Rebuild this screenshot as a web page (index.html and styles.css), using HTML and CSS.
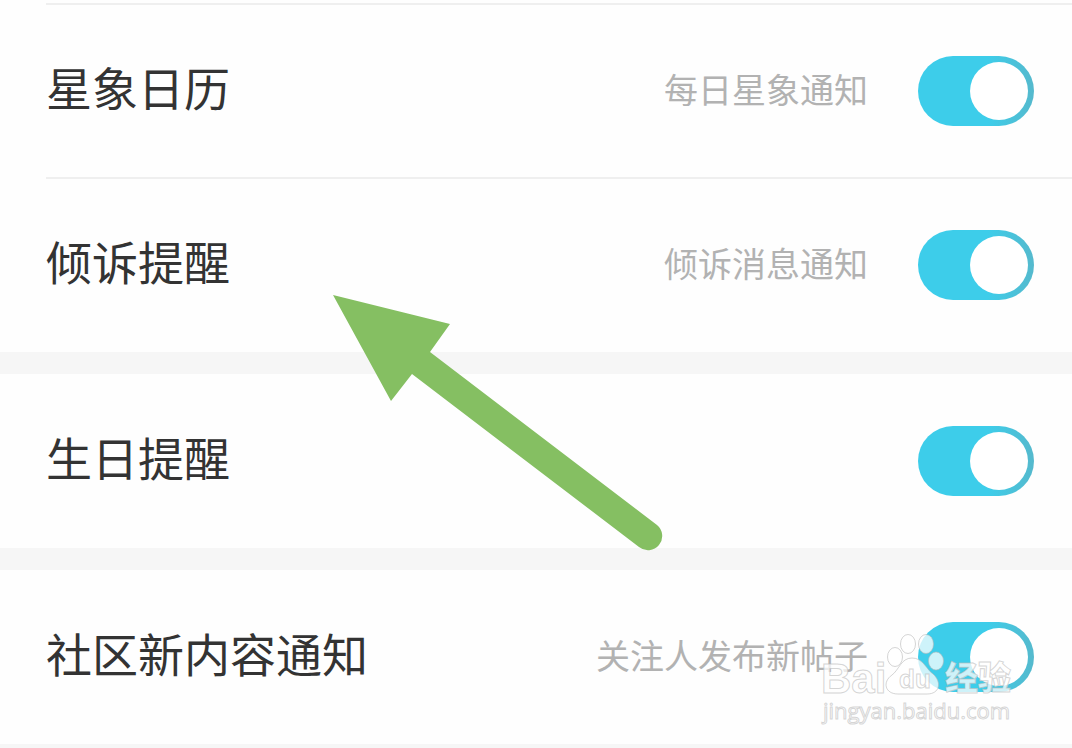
FILE: index.html
```html
<!DOCTYPE html>
<html lang="zh-CN">
<head>
<meta charset="utf-8">
<meta name="viewport" content="width=device-width, initial-scale=1">
<title>通知设置</title>
<link rel="stylesheet" href="styles.css">
</head>
<body>
<main class="settings">
  <section class="group">
    <label class="row">
      <span class="title">星象日历</span>
      <span class="hint">每日星象通知</span>
      <input class="switch" type="checkbox" role="switch" checked>
    </label>
    <label class="row">
      <span class="title">倾诉提醒</span>
      <span class="hint">倾诉消息通知</span>
      <input class="switch" type="checkbox" role="switch" checked>
    </label>
  </section>
  <section class="group">
    <label class="row">
      <span class="title">生日提醒</span>
      <input class="switch" type="checkbox" role="switch" checked>
    </label>
  </section>
  <section class="group">
    <label class="row">
      <span class="title">社区新内容通知</span>
      <span class="hint">关注人发布新帖子</span>
      <input class="switch" type="checkbox" role="switch" checked>
    </label>
  </section>

  <svg class="arrow" viewBox="0 0 330 256" aria-hidden="true">
    <path d="M0 0 L117 29 L97 57 L324 230 A14 14 0 0 1 306 252 L79 79 L58 106 Z"/>
  </svg>

  <svg class="watermark" viewBox="0 0 210 100" role="img" aria-label="Baidu 经验 jingyan.baidu.com">
    <g class="mark">
      <ellipse cx="75" cy="25" rx="7.5" ry="9.5"/>
      <ellipse cx="88" cy="12" rx="7.5" ry="9.5"/>
      <ellipse cx="106" cy="12" rx="7.5" ry="9.5"/>
      <ellipse cx="116" cy="29" rx="7.5" ry="9"/>
      <path d="M92 26 C81 26 79 38 72 43 C62 50 65 62 78 62 H107 C120 62 122 50 113 42 C106 37 103 26 92 26 Z"/>
    </g>
    <text class="mark brand" x="1" y="61">Bai</text>
    <text class="mark du" x="79" y="56">du</text>
    <text class="mark word" x="125" y="58">经验</text>
    <text class="mark url" x="3" y="87">jingyan.baidu.com</text>
  </svg>
</main>
</body>
</html>
```
FILE: styles.css
```css
* {
  box-sizing: border-box;
}

body {
  margin: 0;
  background: #f6f6f6;
  font-family: "Noto Sans CJK SC", sans-serif;
}

.settings {
  position: relative;
  display: flex;
  flex-direction: column;
  gap: 22px;
  padding-bottom: 4px;
  overflow: hidden;
}

.group {
  background: #fefefe;
}

.group:first-child {
  padding-top: 4px;
}

.row {
  position: relative;
  display: flex;
  align-items: center;
  gap: 50px;
  height: 174px;
  padding: 0 38px 0 46px;
  cursor: pointer;
}

.group:first-child .row::before {
  content: "";
  position: absolute;
  top: -1px;
  right: 0;
  left: 46px;
  height: 2px;
  background: #efefef;
}

.title {
  flex: 1;
  padding-bottom: 10px;
  color: #333;
  font-size: 46px;
  line-height: 60px;
}

.hint {
  padding-bottom: 4px;
  color: #b2b2b2;
  font-size: 34px;
  line-height: 48px;
}

.switch {
  appearance: none;
  flex: none;
  width: 116px;
  height: 70px;
  margin: 0;
  padding: 6px;
  border-radius: 35px;
  background: linear-gradient(90deg, #3dcdea 60%, #55b9cd);
  cursor: pointer;
}

.switch::before {
  content: "";
  display: block;
  width: 58px;
  height: 58px;
  border-radius: 50%;
  background: #fff;
}

.switch:checked::before {
  margin-left: auto;
}

.switch:not(:checked) {
  background: #ddd;
}

.arrow {
  position: absolute;
  top: 295px;
  left: 333px;
  width: 330px;
  fill: #85bf62;
  pointer-events: none;
}

.watermark {
  position: absolute;
  right: 42px;
  bottom: 16px;
  width: 210px;
  height: 100px;
  pointer-events: none;
}

.mark {
  fill: rgb(255 255 255 / 75%);
  stroke: rgb(185 185 185 / 60%);
  stroke-width: 1px;
}

.brand,
.du {
  font-family: "Liberation Sans", Arial, sans-serif;
}

.brand {
  font-size: 42px;
  font-weight: 700;
}

.du {
  font-size: 26px;
  font-weight: 700;
}

.word {
  font-size: 33px;
  font-weight: 900;
}

.url {
  font-family: "Open Sans", sans-serif;
  font-size: 22px;
}
```
